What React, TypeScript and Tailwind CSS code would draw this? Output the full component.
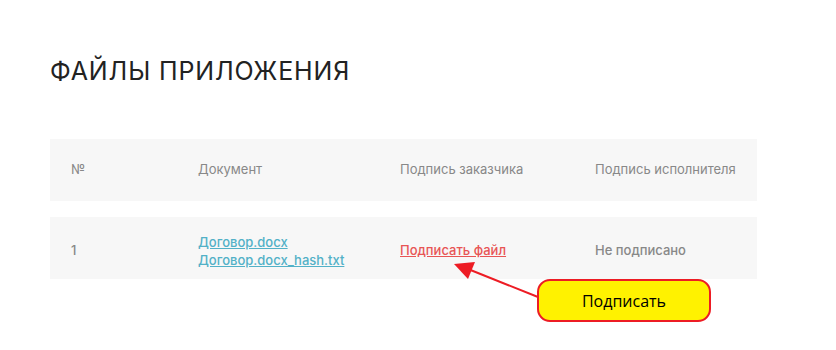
import React from 'react';

const HEADERS = ['№', 'Документ', 'Подпись заказчика', 'Подпись исполнителя'];

export default function App() {
  return (
    <main className="relative min-h-[350px] w-[836px] bg-white font-['Inter',sans-serif]">
      <div className="pl-[50px] pt-[56px]">
        {/* Title */}
        <h1 className="text-[25px] font-normal leading-[30px] tracking-[0.035em] text-[#222]">
          ФАЙЛЫ ПРИЛОЖЕНИЯ
        </h1>

        {/* Table */}
        <div className="mt-[53px] flex w-[707px] flex-col gap-4 text-[13px]">
          <div className="grid h-[62px] grid-cols-[127px_202px_195px_1fr] items-center bg-[#f7f7f7] pl-[21px] text-[#888]">
            {HEADERS.map((h) => (
              <span key={h}>{h}</span>
            ))}
          </div>

          <div className="grid h-[62px] grid-cols-[127px_202px_195px_1fr] items-center bg-[#f7f7f7] pl-[21px] pt-[5px] font-medium">
            <span className="text-[#888]">1</span>
            <div className="flex flex-col leading-[18px]">
              <a href="#" className="text-[#52b1c7] underline">Договор.docx</a>
              <a href="#" className="text-[#52b1c7] underline">Договор.docx_hash.txt</a>
            </div>
            <a href="#" className="text-[#e85555] underline">Подписать файл</a>
            <span className="text-[#888]">Не подписано</span>
          </div>
        </div>
      </div>

      {/* annotation arrow */}
      <svg className="absolute left-0 top-0" width="836" height="350">
        <line x1="538" y1="297" x2="468" y2="269" stroke="#ed1c24" strokeWidth="2" />
        <polygon points="454,264 475,262 468,279" fill="#ed1c24" />
      </svg>

      {/* annotation callout */}
      <div className="absolute left-[537px] top-[279px] flex h-[43px] w-[174px] items-center justify-center rounded-[13px] border-2 border-[#ed1c24] bg-[#fff200] font-['Open_Sans',sans-serif] text-[16px] text-black">
        Подписать
      </div>
    </main>
  );
}
